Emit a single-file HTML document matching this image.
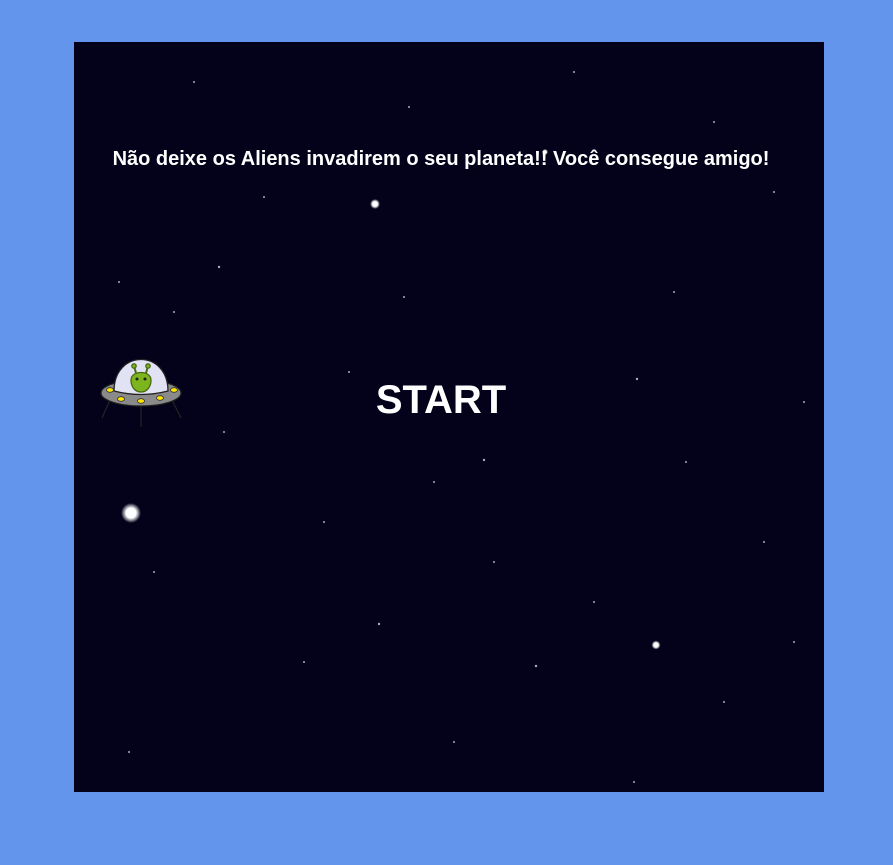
<!DOCTYPE html>
<html><head><meta charset="utf-8"><style>
html,body{margin:0;padding:0;background:#6495ed;width:893px;height:865px;overflow:hidden;font-family:"Liberation Sans",Arial,sans-serif}
#c{position:absolute;left:74px;top:42px;width:750px;height:750px;background:#03021a;overflow:hidden}
.t{position:absolute;left:0;width:734px;text-align:center;color:#fff;font-weight:bold;white-space:nowrap}
</style></head><body>
<div id="c">
<svg width="750" height="750" style="position:absolute;left:0;top:0">
<defs><radialGradient id="g"><stop offset="0" stop-color="#fff"/><stop offset="0.5" stop-color="#fff"/><stop offset="1" stop-color="#fff" stop-opacity="0"/></radialGradient></defs>
<g fill="#aab">
<circle cx="190" cy="155" r="1"/><circle cx="145" cy="225" r="1.2"/><circle cx="335" cy="65" r="1"/><circle cx="470" cy="110" r="1"/>
<circle cx="563" cy="337" r="1.2"/><circle cx="410" cy="418" r="1.2"/><circle cx="612" cy="420" r="1"/><circle cx="305" cy="582" r="1.2"/>
<circle cx="462" cy="624" r="1.2"/><circle cx="55" cy="710" r="1"/><circle cx="250" cy="480" r="1"/><circle cx="690" cy="500" r="1"/>
<circle cx="150" cy="390" r="1"/><circle cx="600" cy="250" r="1"/><circle cx="100" cy="270" r="1"/><circle cx="700" cy="150" r="1"/>
<circle cx="520" cy="560" r="1"/><circle cx="380" cy="700" r="1"/><circle cx="230" cy="620" r="1"/><circle cx="650" cy="660" r="1"/>
<circle cx="330" cy="255" r="1"/><circle cx="45" cy="240" r="1"/><circle cx="730" cy="360" r="1"/><circle cx="560" cy="740" r="1"/>
<circle cx="80" cy="530" r="1"/><circle cx="420" cy="520" r="1"/><circle cx="275" cy="330" r="1"/><circle cx="500" cy="30" r="1"/>
<circle cx="120" cy="40" r="1"/><circle cx="640" cy="80" r="1"/><circle cx="720" cy="600" r="1"/><circle cx="360" cy="440" r="1"/>
</g>
<circle cx="301" cy="162" r="5" fill="url(#g)"/>
<circle cx="57" cy="471" r="10" fill="url(#g)"/>
<circle cx="582" cy="603" r="4.5" fill="url(#g)"/>
<circle cx="471" cy="110" r="3" fill="url(#g)"/>
<g transform="translate(-74,-42)" stroke="#222" stroke-width="1.3">
<line x1="110" y1="400" x2="102" y2="418"/><line x1="172" y1="400" x2="181" y2="418"/><line x1="141" y1="405" x2="141" y2="427"/>
<ellipse cx="141" cy="393" rx="40" ry="13" fill="#8a8a8a"/>
<path d="M114 391 C114 349 168 349 168 391 Q141 398 114 391Z" fill="#e2e2f5"/>
<line x1="136" y1="373" x2="134" y2="366" stroke="#4a6a10" stroke-width="2"/><line x1="146" y1="373" x2="148" y2="366" stroke="#4a6a10" stroke-width="2"/>
<circle cx="134" cy="366" r="2.2" fill="#7db51e" stroke="#4a6a10"/><circle cx="148" cy="366" r="2.2" fill="#7db51e" stroke="#4a6a10"/>
<path d="M131 380 C131 370 151 370 151 380 C151 388 146 392 141 392 C136 392 131 388 131 380Z" fill="#7db51e" stroke="#4a6a10"/>
<circle cx="137" cy="379" r="1.5" fill="#222" stroke="none"/><circle cx="145" cy="379" r="1.5" fill="#222" stroke="none"/>
<g fill="#ffe600" stroke="#333" stroke-width="0.8">
<ellipse cx="110" cy="390" rx="3.5" ry="2.3"/><ellipse cx="121" cy="399" rx="3.5" ry="2.3"/><ellipse cx="141" cy="401" rx="3.5" ry="2.3"/><ellipse cx="160" cy="398" rx="3.5" ry="2.3"/><ellipse cx="174" cy="390" rx="3.5" ry="2.3"/>
</g></g>
</svg>
<div class="t" style="top:105px;font-size:20px;line-height:24px">Não deixe os Aliens invadirem o seu planeta!! Você consegue amigo!</div>
<div class="t" style="top:335px;font-size:40px;line-height:46px">START</div>
</div>
</body></html>
